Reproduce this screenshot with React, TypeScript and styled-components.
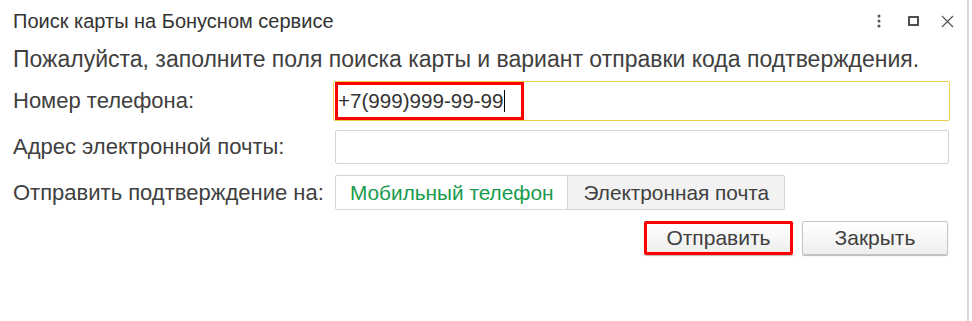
import React from 'react';
import styled, { createGlobalStyle } from 'styled-components';

const Global = createGlobalStyle`
  html, body { margin: 0; padding: 0; background: #fff; }
  body { font-family: "Liberation Sans", Arial, sans-serif; color: #404040; }
`;

const Window = styled.div`
  width: 969px;
  height: 321px;
  box-sizing: border-box;
  border-right: 2px solid #dadada;
  padding: 0 18px 0 13px;
  display: flex;
  flex-direction: column;
`;

const Header = styled.div`
  height: 42px;
  display: flex;
  align-items: center;
  justify-content: space-between;
`;

const Title = styled.div`
  font-size: 20px;
  color: #333;
`;

const Tools = styled.div`
  display: flex;
  align-items: center;
  margin-right: -15px;
`;

const ToolCell = styled.span`
  width: 34px;
  display: flex;
  justify-content: center;
  align-items: center;
`;

const Hint = styled.div`
  font-size: 23px;
  line-height: 34px;
  height: 34px;
  margin-bottom: 5px;
  color: #404040;
  white-space: nowrap;
`;

const Row = styled.div<{ $h: number; $mb: number }>`
  display: grid;
  grid-template-columns: 322px 1fr;
  align-items: center;
  height: ${(p) => p.$h}px;
  margin-bottom: ${(p) => p.$mb}px;
`;

const Label = styled.div`
  font-size: 22px;
  color: #404040;
  white-space: nowrap;
`;

const Field = styled.div<{ $active?: boolean }>`
  height: 100%;
  box-sizing: border-box;
  border: 1px solid ${(p) => (p.$active ? '#eccf4e' : '#d4d4d4')};
  border-radius: 2px;
  display: flex;
  align-items: center;
  padding: 0 1px;
  margin-left: ${(p) => (p.$active ? -2 : 0)}px;
  margin-right: ${(p) => (p.$active ? -1 : 0)}px;
  font-size: 20.6px;
  color: #333;
`;

const Marked = styled.span`
  display: flex;
  align-items: center;
  height: 38px;
  width: 189px;
  box-sizing: border-box;
  border: 3px solid #f00;
  white-space: nowrap;
`;

const Caret = styled.span`
  display: inline-block;
  width: 1px;
  height: 22px;
  background: #000;
  margin-left: 1px;
`;

const Toggle = styled.div`
  display: flex;
  height: 100%;
`;

const ToggleItem = styled.div<{ $on?: boolean }>`
  box-sizing: border-box;
  height: 100%;
  display: flex;
  align-items: center;
  padding: 0 ${(p) => (p.$on ? 14 : 15)}px;
  font-size: 20.8px;
  white-space: nowrap;
  border: 1px solid #d4d4d4;
  border-left-width: ${(p) => (p.$on ? 1 : 0)}px;
  background: ${(p) => (p.$on ? '#fff' : '#f2f2f2')};
  color: ${(p) => (p.$on ? '#189b4b' : '#404040')};
  border-radius: ${(p) => (p.$on ? '2px 0 0 2px' : '0 2px 2px 0')};
`;

const Actions = styled.div`
  display: flex;
  justify-content: flex-end;
  gap: 9px;
  margin-right: 1px;
`;

const Button = styled.button<{ $marked?: boolean }>`
  font-family: inherit;
  font-size: 21px;
  color: #404040;
  height: 34px;
  width: ${(p) => (p.$marked ? 149 : 146)}px;
  box-sizing: border-box;
  border: ${(p) => (p.$marked ? '3px solid #f00' : '1px solid #c6c6c6')};
  border-radius: 2px;
  background: linear-gradient(#ffffff, #eeeeee);
  box-shadow: 0 1px 1px rgba(0, 0, 0, 0.28);
  padding: 0;
`;

export default function App() {
  return (
    <>
      <Global />
      <Window>
        <Header>
          <Title>Поиск карты на Бонусном сервисе</Title>
          <Tools>
            <ToolCell>
              <svg width="4" height="14" viewBox="0 0 4 14">
                <circle cx="2" cy="2" r="1.5" fill="#555" />
                <circle cx="2" cy="7" r="1.5" fill="#555" />
                <circle cx="2" cy="12" r="1.5" fill="#555" />
              </svg>
            </ToolCell>
            <ToolCell>
              <svg width="11" height="10" viewBox="0 0 11 10">
                <rect x="1" y="1" width="9" height="8" fill="none" stroke="#333" strokeWidth="1.7" />
              </svg>
            </ToolCell>
            <ToolCell>
              <svg width="13" height="13" viewBox="0 0 13 13">
                <path d="M1 1L12 12M12 1L1 12" stroke="#555" strokeWidth="1.2" />
              </svg>
            </ToolCell>
          </Tools>
        </Header>
        <Hint>Пожалуйста, заполните поля поиска карты и вариант отправки кода подтверждения.</Hint>
        <Row $h={40} $mb={9}>
          <Label>Номер телефона:</Label>
          <Field $active>
            <Marked>
              +7(999)999-99-99
              <Caret />
            </Marked>
          </Field>
        </Row>
        <Row $h={34} $mb={11}>
          <Label>Адрес электронной почты:</Label>
          <Field />
        </Row>
        <Row $h={35} $mb={11}>
          <Label>Отправить подтверждение на:</Label>
          <Toggle>
            <ToggleItem $on>Мобильный телефон</ToggleItem>
            <ToggleItem>Электронная почта</ToggleItem>
          </Toggle>
        </Row>
        <Actions>
          <Button $marked>Отправить</Button>
          <Button>Закрыть</Button>
        </Actions>
      </Window>
    </>
  );
}
